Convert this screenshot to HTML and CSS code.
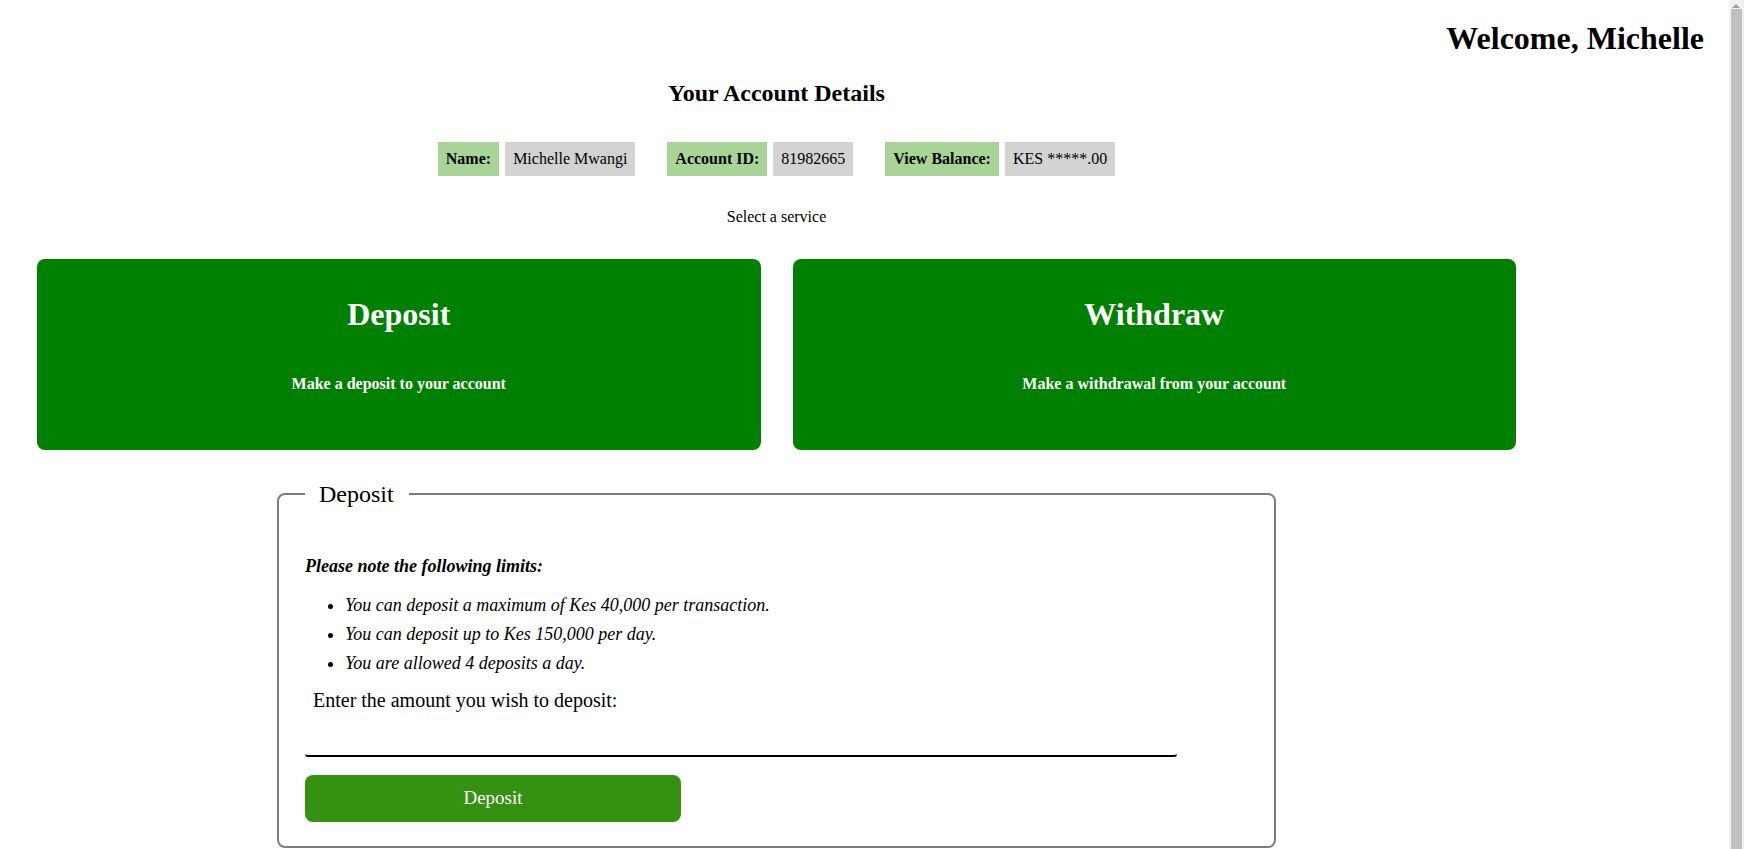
FILE: index.html
```html
<!DOCTYPE html>
<html lang="en">
<head>
<meta charset="utf-8">
<title>Account</title>
<link rel="stylesheet" href="styles.css">
</head>
<body>
<header class="top">
  <h1 class="welcome">Welcome, Michelle</h1>
</header>
<main class="main">
  <h2 class="section-title">Your Account Details</h2>
  <div class="details">
    <div class="pair">
      <span class="label">Name:</span>
      <span class="value">Michelle Mwangi</span>
    </div>
    <div class="pair">
      <span class="label">Account ID:</span>
      <span class="value">81982665</span>
    </div>
    <div class="pair">
      <span class="label">View Balance:</span>
      <span class="value">KES *****.00</span>
    </div>
  </div>
  <p class="select">Select a service</p>
  <div class="cards">
    <div class="card">
      <h1 class="card-title">Deposit</h1>
      <h4 class="card-sub">Make a deposit to your account</h4>
    </div>
    <div class="card">
      <h1 class="card-title">Withdraw</h1>
      <h4 class="card-sub">Make a withdrawal from your account</h4>
    </div>
  </div>
  <fieldset class="panel">
    <legend class="panel-legend">Deposit</legend>
    <p class="note">Please note the following limits:</p>
    <ul class="limits">
      <li>You can deposit a maximum of Kes 40,000 per transaction.</li>
      <li>You can deposit up to Kes 150,000 per day.</li>
      <li>You are allowed 4 deposits a day.</li>
    </ul>
    <label class="amount-label" for="amount">Enter the amount you wish to deposit:</label>
    <input class="amount-input" id="amount" type="text">
    <button class="submit" type="button">Deposit</button>
  </fieldset>
</main>
<div class="scrollbar" aria-hidden="true">
  <span class="scroll-arrow"></span>
  <span class="scroll-thumb"></span>
</div>
</body>
</html>
```
FILE: styles.css
```css
body {
  margin: 8px;
  font-family: "Liberation Serif", "Times New Roman", serif;
  font-size: 16px;
  color: #000;
  background: #fff;
}

.top {
  text-align: right;
  padding-right: 32px;
}

.welcome {
  font-size: 32px;
  margin: 12px 0 22.5px;
}

.main {
  margin-left: 29px;
  width: 1479px;
  text-align: center;
}

.section-title {
  font-size: 24px;
  margin: 22.5px 0 35px;
}

.details {
  display: flex;
  justify-content: center;
  gap: 32px;
}

.pair {
  display: flex;
  gap: 6px;
}

.label,
.value {
  padding: 8.2px 8px;
  line-height: 18px;
}

.label {
  background: #a8d597;
  font-weight: bold;
}

.value {
  background: #d3d3d3;
}

.select {
  margin: 32px 0 33px;
}

.cards {
  display: grid;
  grid-template-columns: 1fr 1fr;
  gap: 32px;
}

.card {
  background: #008000;
  color: #fff;
  border-radius: 8px;
  padding: 16px;
}

.card-title {
  font-size: 32px;
  margin: 21px 0 42px;
}

.card-sub {
  font-size: 16px;
  margin: 0 0 41px;
}

.panel {
  box-sizing: border-box;
  width: 999px;
  margin: 31px auto 0;
  padding: 0 26px 24px;
  border: 2px solid #7d7d7d;
  border-radius: 8px;
  text-align: left;
  font-size: 18px;
}

.panel-legend {
  font-size: 24px;
  padding: 0 15px 0 14px;
}

.note {
  font-weight: bold;
  font-style: italic;
  margin: 48px 0 18px;
}

.limits {
  font-style: italic;
  margin: 0 0 15px;
  padding-left: 40px;
}

.limits li + li {
  margin-top: 8.3px;
}

.amount-label {
  display: block;
  font-size: 20px;
  margin-left: 8px;
}

.amount-input {
  display: block;
  box-sizing: border-box;
  width: 872px;
  height: 35px;
  margin-top: 10px;
  border: none;
  border-bottom: 2px solid #000;
  border-radius: 0 0 3px 3px;
  background: transparent;
  font-size: 18px;
  font-family: inherit;
}

.submit {
  display: block;
  width: 376px;
  height: 47px;
  margin-top: 17.5px;
  border: none;
  border-radius: 8px;
  background: #359110;
  color: #fff;
  font-family: inherit;
  font-size: 19px;
}

.scrollbar {
  position: fixed;
  top: 0;
  right: 0;
  bottom: 0;
  width: 15px;
  background: #f1f1f1;
}

.scroll-arrow {
  position: absolute;
  top: 4px;
  left: 3px;
  width: 0;
  height: 0;
  border-left: 4px solid transparent;
  border-right: 4px solid transparent;
  border-bottom: 4px solid #a3a3a3;
}

.scroll-thumb {
  position: absolute;
  top: 9px;
  left: 2px;
  right: 2px;
  bottom: 0;
  background: #c1c1c1;
}
```
